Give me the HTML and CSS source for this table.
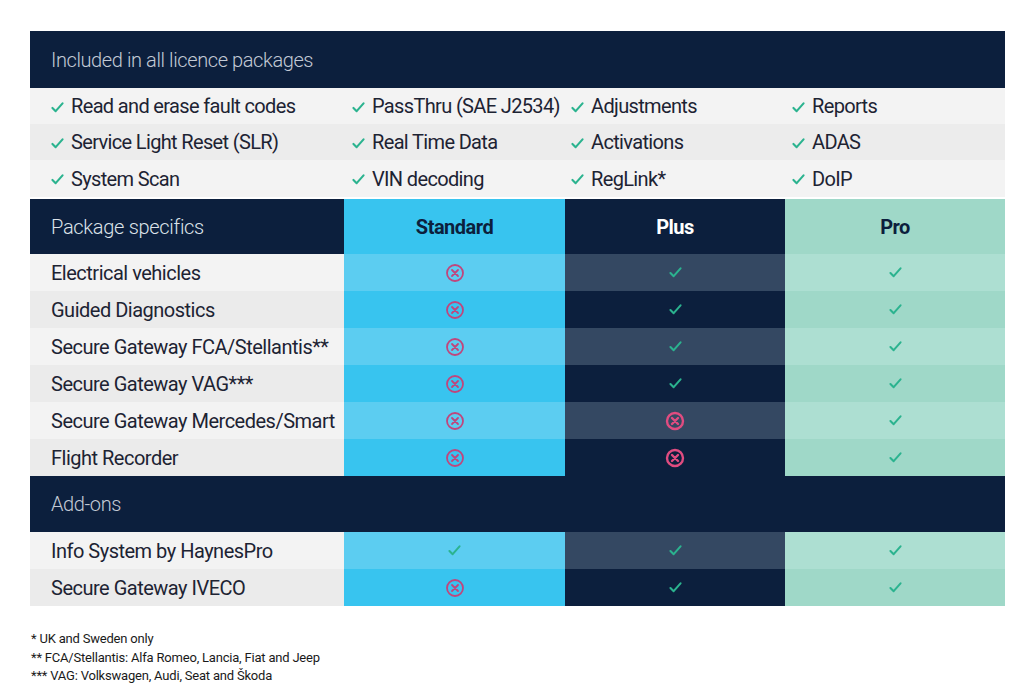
FILE: index.html
```html
<!DOCTYPE html>
<html lang="en">
<head>
<meta charset="utf-8">
<title>Licence packages</title>
<link rel="stylesheet" href="styles.css">
</head>
<body>
<div class="sheet">
  <div class="bar bar-top">Included in all licence packages</div>
  <div class="features">
    <div class="frow">
      <div class="fcell"><svg class="tick" viewBox="0 0 14 12"><path d="M1.5 6.5l3.5 3.5 7.5-8.5"/></svg>Read and erase fault codes</div>
      <div class="fcell"><svg class="tick" viewBox="0 0 14 12"><path d="M1.5 6.5l3.5 3.5 7.5-8.5"/></svg>PassThru (SAE J2534)</div>
      <div class="fcell"><svg class="tick" viewBox="0 0 14 12"><path d="M1.5 6.5l3.5 3.5 7.5-8.5"/></svg>Adjustments</div>
      <div class="fcell"><svg class="tick" viewBox="0 0 14 12"><path d="M1.5 6.5l3.5 3.5 7.5-8.5"/></svg>Reports</div>
    </div>
    <div class="frow alt">
      <div class="fcell"><svg class="tick" viewBox="0 0 14 12"><path d="M1.5 6.5l3.5 3.5 7.5-8.5"/></svg>Service Light Reset (SLR)</div>
      <div class="fcell"><svg class="tick" viewBox="0 0 14 12"><path d="M1.5 6.5l3.5 3.5 7.5-8.5"/></svg>Real Time Data</div>
      <div class="fcell"><svg class="tick" viewBox="0 0 14 12"><path d="M1.5 6.5l3.5 3.5 7.5-8.5"/></svg>Activations</div>
      <div class="fcell"><svg class="tick" viewBox="0 0 14 12"><path d="M1.5 6.5l3.5 3.5 7.5-8.5"/></svg>ADAS</div>
    </div>
    <div class="frow">
      <div class="fcell"><svg class="tick" viewBox="0 0 14 12"><path d="M1.5 6.5l3.5 3.5 7.5-8.5"/></svg>System Scan</div>
      <div class="fcell"><svg class="tick" viewBox="0 0 14 12"><path d="M1.5 6.5l3.5 3.5 7.5-8.5"/></svg>VIN decoding</div>
      <div class="fcell"><svg class="tick" viewBox="0 0 14 12"><path d="M1.5 6.5l3.5 3.5 7.5-8.5"/></svg>RegLink*</div>
      <div class="fcell"><svg class="tick" viewBox="0 0 14 12"><path d="M1.5 6.5l3.5 3.5 7.5-8.5"/></svg>DoIP</div>
    </div>
  </div>

  <div class="grid">
    <div class="hrow">
      <div class="hcell label">Package specifics</div>
      <div class="hcell std">Standard</div>
      <div class="hcell plus">Plus</div>
      <div class="hcell pro">Pro</div>
    </div>
    <div class="row odd">
      <div class="cell label">Electrical vehicles</div>
      <div class="cell std"><svg class="x" viewBox="0 0 20 20"><circle cx="10" cy="10" r="8"/><path d="M7 7l6 6M13 7l-6 6"/></svg></div>
      <div class="cell plus"><svg class="ok" viewBox="0 0 14 12"><path d="M1.5 6.5l3.5 3.5 7.5-8.5"/></svg></div>
      <div class="cell pro"><svg class="ok" viewBox="0 0 14 12"><path d="M1.5 6.5l3.5 3.5 7.5-8.5"/></svg></div>
    </div>
    <div class="row even">
      <div class="cell label">Guided Diagnostics</div>
      <div class="cell std"><svg class="x" viewBox="0 0 20 20"><circle cx="10" cy="10" r="8"/><path d="M7 7l6 6M13 7l-6 6"/></svg></div>
      <div class="cell plus"><svg class="ok" viewBox="0 0 14 12"><path d="M1.5 6.5l3.5 3.5 7.5-8.5"/></svg></div>
      <div class="cell pro"><svg class="ok" viewBox="0 0 14 12"><path d="M1.5 6.5l3.5 3.5 7.5-8.5"/></svg></div>
    </div>
    <div class="row odd">
      <div class="cell label">Secure Gateway FCA/Stellantis**</div>
      <div class="cell std"><svg class="x" viewBox="0 0 20 20"><circle cx="10" cy="10" r="8"/><path d="M7 7l6 6M13 7l-6 6"/></svg></div>
      <div class="cell plus"><svg class="ok" viewBox="0 0 14 12"><path d="M1.5 6.5l3.5 3.5 7.5-8.5"/></svg></div>
      <div class="cell pro"><svg class="ok" viewBox="0 0 14 12"><path d="M1.5 6.5l3.5 3.5 7.5-8.5"/></svg></div>
    </div>
    <div class="row even">
      <div class="cell label">Secure Gateway VAG***</div>
      <div class="cell std"><svg class="x" viewBox="0 0 20 20"><circle cx="10" cy="10" r="8"/><path d="M7 7l6 6M13 7l-6 6"/></svg></div>
      <div class="cell plus"><svg class="ok" viewBox="0 0 14 12"><path d="M1.5 6.5l3.5 3.5 7.5-8.5"/></svg></div>
      <div class="cell pro"><svg class="ok" viewBox="0 0 14 12"><path d="M1.5 6.5l3.5 3.5 7.5-8.5"/></svg></div>
    </div>
    <div class="row odd">
      <div class="cell label">Secure Gateway Mercedes/Smart</div>
      <div class="cell std"><svg class="x" viewBox="0 0 20 20"><circle cx="10" cy="10" r="8"/><path d="M7 7l6 6M13 7l-6 6"/></svg></div>
      <div class="cell plus"><svg class="x x-hot" viewBox="0 0 20 20"><circle cx="10" cy="10" r="8"/><path d="M7 7l6 6M13 7l-6 6"/></svg></div>
      <div class="cell pro"><svg class="ok" viewBox="0 0 14 12"><path d="M1.5 6.5l3.5 3.5 7.5-8.5"/></svg></div>
    </div>
    <div class="row even">
      <div class="cell label">Flight Recorder</div>
      <div class="cell std"><svg class="x" viewBox="0 0 20 20"><circle cx="10" cy="10" r="8"/><path d="M7 7l6 6M13 7l-6 6"/></svg></div>
      <div class="cell plus"><svg class="x x-hot" viewBox="0 0 20 20"><circle cx="10" cy="10" r="8"/><path d="M7 7l6 6M13 7l-6 6"/></svg></div>
      <div class="cell pro"><svg class="ok" viewBox="0 0 14 12"><path d="M1.5 6.5l3.5 3.5 7.5-8.5"/></svg></div>
    </div>
  </div>

  <div class="bar bar-addons">Add-ons</div>

  <div class="grid">
    <div class="row odd">
      <div class="cell label">Info System by HaynesPro</div>
      <div class="cell std"><svg class="ok" viewBox="0 0 14 12"><path d="M1.5 6.5l3.5 3.5 7.5-8.5"/></svg></div>
      <div class="cell plus"><svg class="ok" viewBox="0 0 14 12"><path d="M1.5 6.5l3.5 3.5 7.5-8.5"/></svg></div>
      <div class="cell pro"><svg class="ok" viewBox="0 0 14 12"><path d="M1.5 6.5l3.5 3.5 7.5-8.5"/></svg></div>
    </div>
    <div class="row even">
      <div class="cell label">Secure Gateway IVECO</div>
      <div class="cell std"><svg class="x" viewBox="0 0 20 20"><circle cx="10" cy="10" r="8"/><path d="M7 7l6 6M13 7l-6 6"/></svg></div>
      <div class="cell plus"><svg class="ok" viewBox="0 0 14 12"><path d="M1.5 6.5l3.5 3.5 7.5-8.5"/></svg></div>
      <div class="cell pro"><svg class="ok" viewBox="0 0 14 12"><path d="M1.5 6.5l3.5 3.5 7.5-8.5"/></svg></div>
    </div>
  </div>

  <div class="notes">
    <p>* UK and Sweden only</p>
    <p>** FCA/Stellantis: Alfa Romeo, Lancia, Fiat and Jeep</p>
    <p>*** VAG: Volkswagen, Audi, Seat and Škoda</p>
  </div>
</div>
</body>
</html>
```

FILE: styles.css
```css
* { box-sizing: border-box; }

body {
  margin: 0;
  background: #ffffff;
  font-family: Roboto, "Liberation Sans", sans-serif;
  color: #1d2333;
}

.sheet {
  width: 975px;
  margin-left: 30px;
  padding-top: 31px;
}

.bar {
  display: flex;
  align-items: center;
  background: #0c1f3d;
  color: #c3cad6;
  font-size: 20px;
  font-weight: 300;
  padding-left: 21px;
  letter-spacing: -0.4px;
}

.bar-top { height: 57px; }
.bar-addons { height: 56px; }

.features {
  margin-bottom: 2px;
}

.frow {
  display: grid;
  grid-template-columns: 301px 219px 221px 213px;
  padding-left: 21px;
  height: 36px;
  align-items: center;
  background: #f3f3f3;
  font-size: 20px;
  letter-spacing: -0.65px;
}

.frow.alt { background: #ececec; }
.frow:last-child { height: 37px; }

.fcell {
  white-space: nowrap;
  display: flex;
  align-items: center;
}

.tick {
  width: 13px;
  height: 11px;
  margin: 2px 7px 0 0;
  flex: none;
  fill: none;
  stroke: #2bb38f;
  stroke-width: 2.3;
  stroke-linecap: round;
  stroke-linejoin: round;
}

.grid { display: block; }

.hrow, .row {
  display: grid;
  grid-template-columns: 314px 221px 220px 220px;
}

.hrow { height: 55px; }
.row { height: 37px; }

.hcell, .cell {
  display: flex;
  align-items: center;
  justify-content: center;
}

.hcell { font-size: 20px; font-weight: 700; letter-spacing: -0.5px; }

.hcell.label {
  justify-content: flex-start;
  padding-left: 21px;
  background: #0c1f3d;
  color: #dde3ea;
  font-weight: 300;
  letter-spacing: -0.3px;
}
.hcell.std { background: #38c4ef; color: #0c1f3d; }
.hcell.plus { background: #0c1f3d; color: #ffffff; }
.hcell.pro { background: #9fd8c8; color: #0c1f3d; }

.cell.label {
  justify-content: flex-start;
  padding-left: 21px;
  font-size: 20px;
  letter-spacing: -0.5px;
  white-space: nowrap;
}

.odd .label { background: #f3f3f3; }
.even .label { background: #ebebeb; }
.odd .std { background: #5ccdf1; }
.even .std { background: #38c4ef; }
.odd .plus { background: #344862; }
.even .plus { background: #0c1f3d; }
.odd .pro { background: #addfd2; }
.even .pro { background: #9fd8c8; }

.x {
  width: 20px;
  height: 20px;
  fill: none;
  stroke: #c0467c;
  stroke-width: 1.8;
  stroke-linecap: round;
}
.x-hot { stroke: #e04c80; stroke-width: 2.4; }

.ok {
  width: 13px;
  height: 11px;
  fill: none;
  stroke: #2bb38f;
  stroke-width: 2.2;
  stroke-linecap: round;
  stroke-linejoin: round;
}

.notes {
  margin-top: 24px;
  padding-left: 1px;
  font-size: 13px;
  line-height: 18.5px;
  color: #1a1a1a;
  letter-spacing: -0.2px;
}
.notes p { margin: 0; }
```
